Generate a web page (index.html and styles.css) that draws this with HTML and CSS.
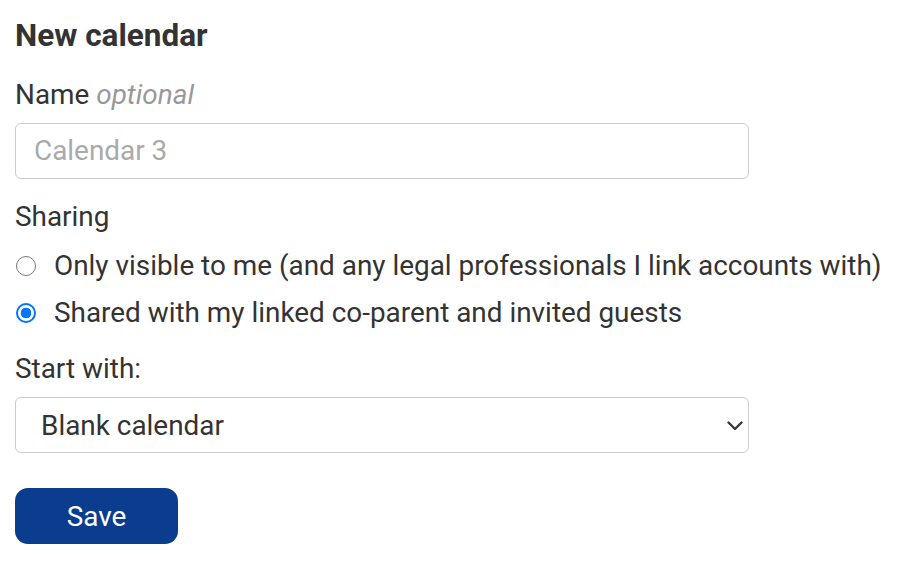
FILE: index.html
```html
<!DOCTYPE html>
<html lang="en">
<head>
<meta charset="utf-8">
<title>New calendar</title>
<link rel="stylesheet" href="styles.css">
</head>
<body>
<form class="form">
  <h5 class="title">New calendar</h5>
  <div class="group name-group">
    <label class="label" for="name">Name <em class="optional">optional</em></label>
    <input class="control" id="name" type="text" placeholder="Calendar 3">
  </div>
  <div class="group sharing">
    <div class="label">Sharing</div>
    <label class="radio-row"><input class="radio" type="radio" name="share"><span>Only visible to me (and any legal professionals I link accounts with)</span></label>
    <label class="radio-row"><input class="radio" type="radio" name="share" checked><span>Shared with my linked co-parent and invited guests</span></label>
  </div>
  <div class="group">
    <label class="label" for="start">Start with:</label>
    <div class="select-wrap">
      <select class="control select" id="start">
        <option>Blank calendar</option>
      </select>
      <svg class="chevron" width="16" height="10" viewBox="0 0 16 10"><path d="M1.5 1.5 L8 8 L14.5 1.5" fill="none" stroke="#343a40" stroke-width="2.4" stroke-linecap="round" stroke-linejoin="round"/></svg>
    </div>
  </div>
  <button class="btn" type="button">Save</button>
</form>
</body>
</html>
```

FILE: styles.css
```css
* { box-sizing: border-box; }
html, body { margin: 0; padding: 0; background: #fff; }
body {
  font-family: Roboto, "Liberation Sans", Arial, sans-serif;
  font-size: 27.9px;
  line-height: 42px;
  color: #333;
}
.form {
  padding: 17px 15px 0 15px;
}
.title {
  font-size: 31.5px;
  font-weight: 700;
  line-height: 37.8px;
  margin: 0 0 19.7px 0;
  color: #333;
}
.group { margin-bottom: 16px; }
.label {
  display: block;
  margin-bottom: 7.5px;
}
.name-group .label { margin-bottom: 6.5px; }
.name-group { margin-bottom: 17px; }
.optional {
  color: #999;
  font-style: italic;
}
.control {
  display: block;
  width: 734px;
  height: 56px;
  padding: 0 18px;
  font-family: inherit;
  font-size: 27.9px;
  color: #333;
  background: #fff;
  border: 1.5px solid #ccc;
  border-radius: 6px;
  outline: none;
}
.control::placeholder { color: #aaa; }
.sharing .label { margin-bottom: 7px; }
.sharing { margin-bottom: 14px; }
.radio-row {
  display: flex;
  align-items: center;
  gap: 18px;
  margin-bottom: 5px;
  white-space: nowrap;
}
.radio-row:last-child { margin-bottom: 0; }
.radio {
  appearance: none;
  -webkit-appearance: none;
  width: 20px;
  height: 20px;
  margin: 0 0 0 1px;
  flex: none;
  border: 1.6px solid #767676;
  border-radius: 50%;
  background: #fff;
}
.radio:checked {
  border: 2px solid #0075ff;
  background: radial-gradient(circle, #0075ff 0 5px, #fff 5.6px);
}
.select-wrap { position: relative; width: 734px; }
.select {
  appearance: none;
  -webkit-appearance: none;
  padding-left: 25px;
}
.chevron {
  position: absolute;
  right: 6px;
  top: 24px;
  pointer-events: none;
}
.btn {
  display: block;
  margin-top: 35px;
  width: 163px;
  height: 56px;
  border: none;
  border-radius: 13px;
  background: #0b3d8f;
  color: #fff;
  font-family: inherit;
  font-size: 27.9px;
  padding: 0;
}
```
